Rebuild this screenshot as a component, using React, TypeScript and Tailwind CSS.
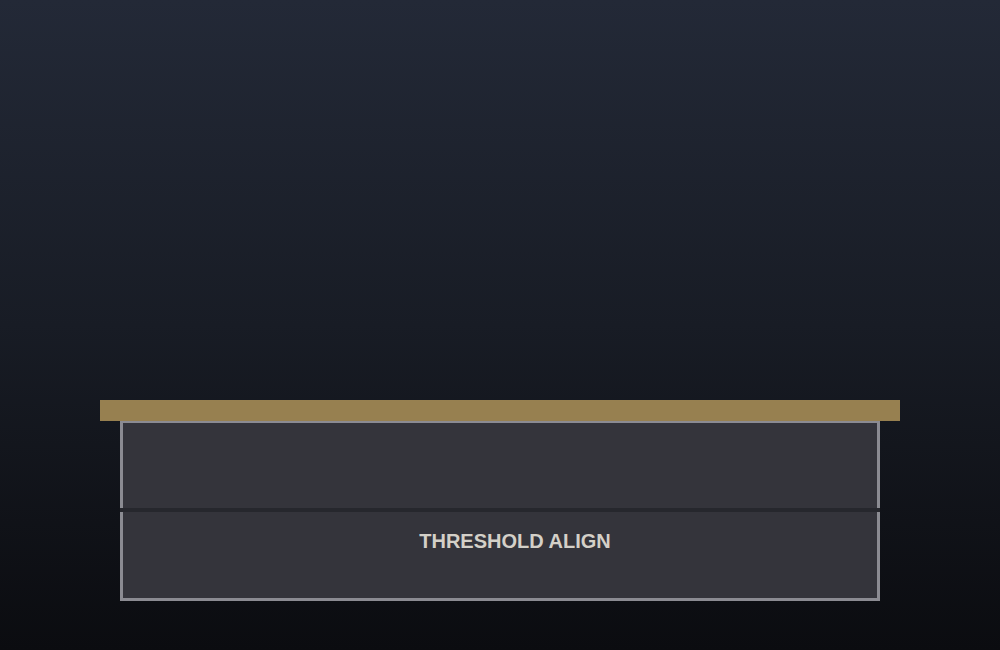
export default function App() {
  return (
    <div
      className="w-[1000px] h-[650px] bg-gradient-to-b from-[#232937] via-[#181c25] to-[#0b0c10] flex flex-col"
      style={{ fontFamily: '"Liberation Sans", Arial, sans-serif' }}
    >
      <div className="h-[400px]" />
      {/* shelf lip */}
      <div className="mx-[100px] h-[21px] bg-[#978050]" />
      <div className="mx-[120px] flex flex-col">
        <div className="h-[87px] bg-[#34343b] border-x-[3px] border-t-[2px] border-[#8b8b92]" />
        <div className="h-[4px] bg-[#26272d]" />
        <div className="h-[89px] bg-[#34343b] border-x-[3px] border-b-[3px] border-[#8b8b92] flex items-start justify-center pl-[30px] pt-[15px]">
          <span className="text-[20px] leading-[28px] font-bold text-[#d4d0c8]">THRESHOLD ALIGN</span>
        </div>
      </div>
    </div>
  );
}
